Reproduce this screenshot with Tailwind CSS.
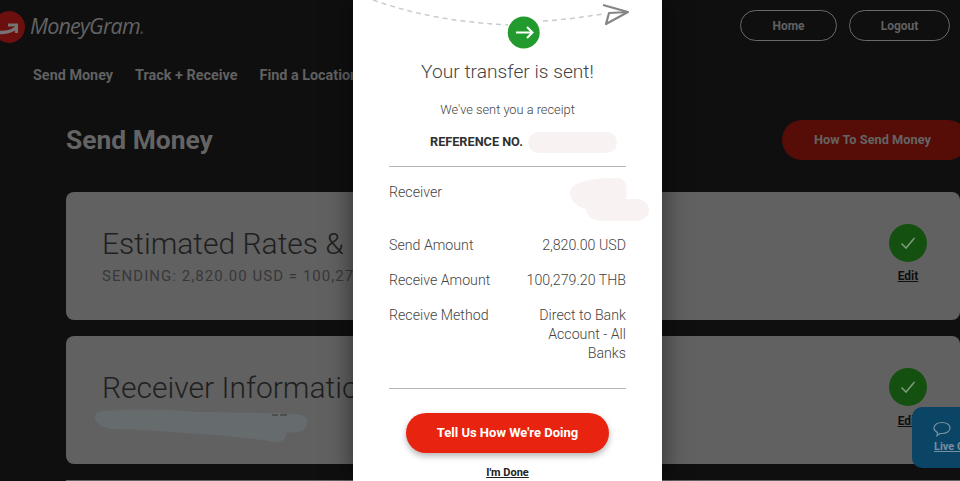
<!DOCTYPE html>
<html lang="en">
<head>
    <meta charset="UTF-8">
    <title>Send Money - MoneyGram</title>
    <script src="https://cdn.jsdelivr.net/npm/@tailwindcss/browser@4"></script>
</head>
<body class="relative h-[481px] w-[960px] overflow-hidden bg-[#0f0f10] font-['Roboto',sans-serif]">
    <!-- Header -->
    <header class="flex h-[120px] justify-between">
        <div>
            <div class="ml-[-8px] flex h-[54px] items-center">
                <svg class="h-[32px] w-[33px]" viewBox="0 0 33 32">
                    <circle cx="17" cy="16" r="16" fill="#6b100f"/>
                    <path d="M4 21c7 1 15 0 20-4" fill="none" stroke="#757575" stroke-width="3.500"/>
                    <path d="M16 14h8.500v8" fill="none" stroke="#757575" stroke-width="3"/>
                </svg>
                <span class="ml-[5px] mt-[-2px] font-['Open_Sans',sans-serif] text-[21.5px] leading-none tracking-[-0.8px] text-[#636363] italic">MoneyGram<span class="text-[#3f3f3f]">.</span></span>
            </div>
            <nav class="mt-[12px] ml-[33px] flex gap-[22px] text-[14.4px] leading-5 font-bold whitespace-nowrap text-[#616161]">
                <a>Send Money</a>
                <a>Track + Receive</a>
                <a>Find a Location</a>
            </nav>
        </div>
        <div class="mt-[10px] mr-[10px] flex gap-[12px] text-[12px] font-bold text-[#616161]">
            <a class="flex h-[31px] w-[97px] items-center justify-center rounded-full border border-[#686868]">Home</a>
            <a class="flex h-[31px] w-[101px] items-center justify-center rounded-full border border-[#686868]">Logout</a>
        </div>
    </header>

    <main class="pl-[66px]">
        <div class="flex h-[72px] items-center justify-between pb-[32px]">
            <h1 class="text-[26.4px] leading-none font-bold text-[#646464]">Send Money</h1>
            <a class="mr-[-8px] flex h-[40px] w-[186px] items-center rounded-full bg-[#560d07] pl-[32px] text-[12.8px] font-bold text-[#646464]">How To Send Money</a>
        </div>

        <div class="flex flex-col gap-[16px]">
            <section class="flex h-[128px] justify-between rounded-lg bg-[#616161] pt-[34px] pr-[33px] pl-[36px]">
                <div>
                    <h2 class="text-[30px] leading-9 font-light text-[#1f1f1f]">Estimated Rates &amp; Fees</h2>
                    <p class="mt-[4px] text-[15px] leading-5 tracking-[1.05px] text-[#383838]">SENDING: 2,820.00 USD = 100,279.20 THB</p>
                </div>
                <div class="flex flex-col items-center">
                    <span class="mt-[-2px] flex h-[38px] w-[38px] items-center justify-center rounded-full bg-[#145010]">
                        <svg class="h-[16px] w-[16px]" viewBox="0 0 16 16" fill="none" stroke="#7d997a" stroke-width="1.600"><path d="M1.500 8.500l4.500 4.500 8.500-10"/></svg>
                    </span>
                    <a class="mt-[4px] text-[12px] leading-5 font-bold text-[#0f0f0f] underline">Edit</a>
                </div>
            </section>

            <section class="flex h-[128px] justify-between rounded-lg bg-[#616161] pt-[34px] pr-[33px] pl-[36px]">
                <div>
                    <h2 class="text-[30px] leading-9 font-light text-[#1f1f1f]">Receiver Information</h2>
                </div>
                <div class="flex flex-col items-center">
                    <span class="mt-[-2px] flex h-[38px] w-[38px] items-center justify-center rounded-full bg-[#145010]">
                        <svg class="h-[16px] w-[16px]" viewBox="0 0 16 16" fill="none" stroke="#7d997a" stroke-width="1.600"><path d="M1.500 8.500l4.500 4.500 8.500-10"/></svg>
                    </span>
                    <a class="mt-[5px] text-[12px] leading-5 font-bold text-[#0f0f0f] underline">Edit</a>
                </div>
            </section>

            <section class="h-px bg-[#616161]"></section>
        </div>
    </main>

    <!-- Scribble over the receiver name -->
    <svg class="absolute top-[409px] left-[94px] h-[37px] w-[214px]" viewBox="0 0 214 37">
        <path d="M10 2c30-2 60-2 90 1 40 0 75 1 100 2 12 0 14 5 13 9 0 5-4 9-9 9l-12 1c0 6-3 10-12 9-30-5-60-7-90-9-25-2-50-4-73-4C6 18 1 13 1 8c0-4 4-6 9-6z" fill="#666b6e"/>
        <path d="M178 6h6M186 6h7" stroke="#333" stroke-width="1"/>
    </svg>

    <!-- Live chat tab -->
    <div class="absolute top-[407px] left-[912px] h-[61px] w-[70px] rounded-[10px] bg-[#0a4565] pt-[14px] pl-[22px] text-[#7890a0]">
        <svg class="ml-[-1px] h-[16px] w-[18px]" viewBox="0 0 18 16" fill="none" stroke="currentColor" stroke-width="1.200"><path d="M9 1.500c4.500 0 8 2.300 8 5.500s-3.500 5.500-8 5.500l-2 .1-3 2 .6-3C2.500 10.500 1 9 1 7c0-3.200 3.500-5.500 8-5.500z"/></svg>
        <a class="mt-[2px] block text-[11px] leading-4 font-bold whitespace-nowrap underline">Live Chat</a>
    </div>

    <!-- Confirmation modal -->
    <div class="absolute top-0 left-[353px] h-[481px] w-[309px] bg-white px-[36px] shadow-[0_0_24px_rgba(0,0,0,0.55)]">
        <svg class="absolute top-0 left-0 h-[50px] w-[309px]" viewBox="0 0 309 50">
            <path d="M20 0C60 14 100 22 155 25" fill="none" stroke="#c8cbd0" stroke-width="1.500" stroke-dasharray="5 4"/>
            <path d="M190 21C210 20 230 17 250 14" fill="none" stroke="#c8cbd0" stroke-width="1.500" stroke-dasharray="5 4"/>
            <path d="M250 5l25 7-22 12 3-11 19-1" fill="none" stroke="#858585" stroke-width="2.200" stroke-linejoin="round"/>
            <circle cx="170.700" cy="32.500" r="16" fill="#239a2d"/>
            <path d="M163 32.500h16M174 27l5.500 5.500-5.500 5.500" fill="none" stroke="#fff" stroke-width="2"/>
        </svg>

        <h2 class="pt-[59px] text-center text-[19.2px] leading-[26px] font-light text-[#444]">Your transfer is sent!</h2>
        <p class="mt-[15px] text-center text-[12.8px] leading-5 font-light text-[#444]">We've sent you a receipt</p>
        <div class="mt-[11px] flex h-[22px] items-center pl-[41px]">
            <span class="text-[12.7px] leading-none font-bold text-[#2f2f2f]">REFERENCE NO.</span>
            <span class="ml-[5px] h-[21px] w-[89px] rounded-full bg-[#f8f3f2]"></span>
        </div>

        <dl class="mt-[13px] border-y border-[#b5b5b5] text-[14.2px] leading-[19px] font-light text-[#444]">
            <div class="relative flex h-[61px] justify-between pt-[16px]">
                <dt>Receiver</dt>
                <dd>
                    <svg class="absolute top-[11px] right-[-23px] h-[43px] w-[80px]" viewBox="0 0 80 43">
                        <path d="M1 14C2 5 18 0 48 0c10 0 11 10 9 21h12c7 0 11 5 11 11s-5 11-14 11H35c-12 0-18-5-18-12C8 29 0 22 1 14z" fill="#f8f3f2"/>
                    </svg>
                </dd>
            </div>
            <div class="flex h-[35px] justify-between pt-[8px]"><dt>Send Amount</dt><dd>2,820.00 USD</dd></div>
            <div class="flex h-[35px] justify-between pt-[8px]"><dt>Receive Amount</dt><dd>100,279.20 THB</dd></div>
            <div class="flex h-[90px] justify-between pt-[8px]"><dt>Receive Method</dt><dd class="w-[100px] text-right">Direct to Bank Account - All Banks</dd></div>
        </dl>

        <a class="mx-auto mt-[24px] flex h-[40px] w-[203px] items-center justify-center rounded-full bg-[#e82410] text-[13px] font-bold text-white shadow-[0_3px_6px_rgba(0,0,0,0.3)]">Tell Us How We're Doing</a>
        <a class="mt-[9px] block pt-[1px] text-center text-[11px] leading-5 font-bold text-[#222] underline">I'm Done</a>
    </div>
</body>
</html>
